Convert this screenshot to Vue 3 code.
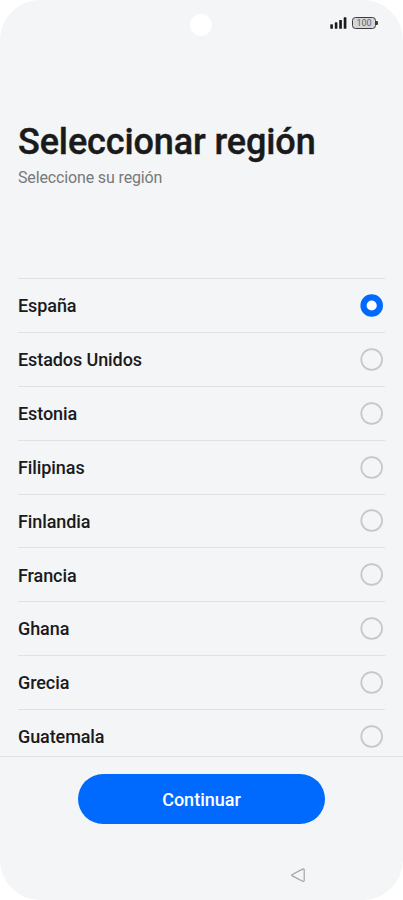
<script setup>
import { ref } from 'vue'

const regions = [
  'España',
  'Estados Unidos',
  'Estonia',
  'Filipinas',
  'Finlandia',
  'Francia',
  'Ghana',
  'Grecia',
  'Guatemala',
]
const selected = ref('España')
</script>

<template>
  <div class="phone">
    <div class="status">
      <span class="camera"></span>
      <svg class="signal" width="17" height="12" viewBox="0 0 17 12" fill="#1b1c1e">
        <rect x="0.3" y="7.2" width="2.6" height="4.6" rx="0.6" />
        <rect x="4.8" y="5.3" width="2.6" height="6.5" rx="0.6" />
        <rect x="9.2" y="3" width="2.7" height="8.8" rx="0.6" />
        <rect x="13.7" y="0.2" width="2.7" height="11.6" rx="0.6" />
      </svg>
      <span class="battery"><span class="level">100</span></span>
    </div>

    <header class="header">
      <h1 class="title">Seleccionar región</h1>
      <p class="subtitle">Seleccione su región</p>
    </header>

    <main class="list">
      <label v-for="name in regions" :key="name" class="row" @click="selected = name">
        <span class="name">{{ name }}</span>
        <svg class="radio" width="23" height="23" viewBox="0 0 23 23">
          <circle v-if="name === selected" cx="11.7" cy="11.5" r="8.2" fill="#fff" stroke="#006aff" stroke-width="6.2" />
          <circle v-else cx="11.7" cy="11.5" r="10.4" fill="none" stroke="#c5c7c9" stroke-width="1.7" />
        </svg>
      </label>
    </main>

    <footer class="footer">
      <button class="continue" type="button">Continuar</button>
      <nav class="nav">
        <svg width="16" height="16" viewBox="0 0 16 16" fill="none" stroke="#a3a5a7" stroke-width="1.2" stroke-linejoin="round">
          <path d="M2.3 7.5 L12.6 2.1 Q14.2 1.4 14.2 3 V13.3 Q14.2 14.9 12.6 14.2 L2.3 8.9 Q1.3 8.2 2.3 7.5 Z" />
        </svg>
      </nav>
    </footer>
  </div>
</template>

<style>
body {
  margin: 0;
  background: #fff;
}
</style>

<style scoped>
.phone {
  display: flex;
  flex-direction: column;
  box-sizing: border-box;
  width: 403px;
  height: 900px;
  overflow: hidden;
  border-radius: 40px;
  background: #f3f5f7;
  color: #1a1a1b;
  font-family: Roboto, "Liberation Sans", sans-serif;
}
.status {
  position: relative;
  display: flex;
  flex: none;
  justify-content: flex-end;
  align-items: flex-start;
  gap: 5px;
  box-sizing: border-box;
  height: 46px;
  padding: 17px 25px 0 0;
}
.camera {
  position: absolute;
  top: 14px;
  left: 190px;
  width: 22px;
  height: 22px;
  border-radius: 50%;
  background: #fff;
}
.battery {
  position: relative;
  box-sizing: border-box;
  width: 24px;
  height: 12px;
  margin-right: 2px;
  border: 1px solid #3b3c3e;
  border-radius: 3.5px;
  background: #d5d6d8;
}
.battery::after {
  content: "";
  position: absolute;
  top: 3px;
  right: -2.5px;
  width: 1.5px;
  height: 4px;
  border-radius: 0 1px 1px 0;
  background: #3b3c3e;
}
.level {
  display: block;
  color: #626365;
  font-size: 9px;
  font-weight: 400;
  line-height: 11px;
  text-align: center;
}
.header {
  flex: none;
  box-sizing: border-box;
  height: 232px;
  padding: 74px 18px 0;
}
.title {
  margin: 0;
  font-size: 36px;
  font-weight: 500;
  line-height: 44px;
  letter-spacing: -0.11px;
  white-space: nowrap;
  -webkit-text-stroke: 0.4px currentColor;
}
.subtitle {
  margin: 4px 0 0;
  color: #77797b;
  font-size: 16px;
  line-height: 20px;
  letter-spacing: -0.14px;
}
.list {
  flex: none;
  height: 478px;
  padding: 0 18px;
  overflow: hidden;
}
.row {
  display: flex;
  align-items: center;
  justify-content: space-between;
  box-sizing: border-box;
  height: 53.88px;
  padding-right: 2px;
  border-top: 1px solid #dfe1e3;
}
.name {
  padding-top: 1.4px;
  font-size: 18px;
  font-weight: 500;
  line-height: 24px;
  letter-spacing: -0.09px;
}
.radio {
  flex: none;
  overflow: visible;
}
.footer {
  flex: 1;
  display: flex;
  flex-direction: column;
  align-items: center;
  border-top: 1px solid #dfe1e3;
}
.continue {
  width: 247px;
  height: 50px;
  margin-top: 17px;
  padding: 1px 0 0;
  border: 0;
  border-radius: 25px;
  background: #006aff;
  color: #fff;
  font: 500 18px/49px Roboto, "Liberation Sans", sans-serif;
}
.nav {
  display: flex;
  justify-content: flex-end;
  box-sizing: border-box;
  width: 100%;
  padding: 43px 97px 0 0;
}
</style>
